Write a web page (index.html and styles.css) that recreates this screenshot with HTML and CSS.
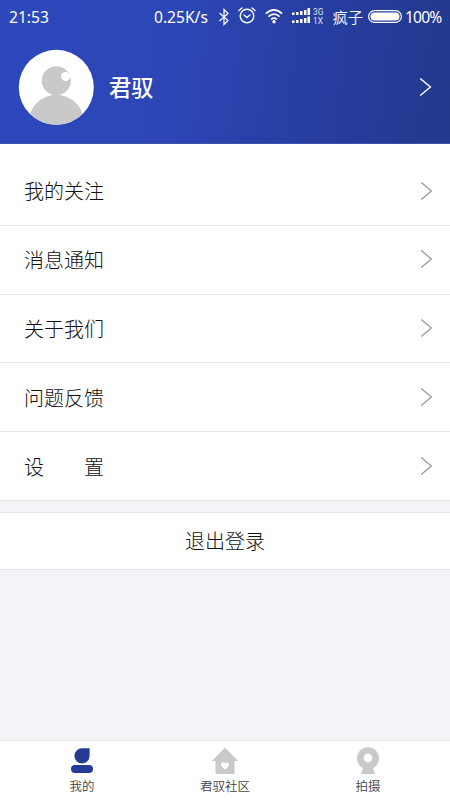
FILE: index.html
```html
<!DOCTYPE html>
<html lang="zh-CN">
<head>
<meta charset="utf-8">
<meta name="viewport" content="width=device-width, initial-scale=1">
<title>我的</title>
<link rel="stylesheet" href="styles.css">
</head>
<body>
<div class="app">
  <header class="header">
    <div class="status">
      <span class="time">21:53</span>
      <span class="speed">0.25K/s</span>
      <svg class="bluetooth" width="12" height="18" viewBox="0 0 12 18" fill="none" stroke="currentColor" stroke-width="1.2"><path d="M1.5 5 10 12.5 6 16.5V1.5L10 5.5 1.5 13"/></svg>
      <svg class="alarm" width="18" height="18" viewBox="0 0 18 18" fill="none" stroke="currentColor" stroke-width="1.4" stroke-linecap="round"><circle cx="9" cy="9" r="6.8"/><path d="M1 3.5 4 1M17 3.5 14 1M6 8 9 10.5l3-2.5"/></svg>
      <svg class="wifi" width="18" height="16" viewBox="0 0 18 16" fill="none" stroke="currentColor" stroke-width="1.6"><path d="M.8 5.6Q9-2 17.2 5.6M3.4 8.6q5.6-5 11.2 0M6 11.3q3-2.5 6 0"/><circle cx="9" cy="13.8" r="1.7" fill="currentColor" stroke="none"/></svg>
      <svg class="signal" width="18" height="16" viewBox="0 0 18 16" fill="currentColor"><path d="M0 4.5h2.5V7H0zM4 4h2.5v3H4zM8 3h2.5v4H8zM12 2h2.5v5H12zM15.5 0H18v7h-2.5zM0 12.5h2.5V15H0zM4 12h2.5v3H4zM8 11h2.5v4H8zM12 10h2.5v5H12zM15.5 8.5H18V15h-2.5z"/></svg>
      <span class="network"><span>3G</span><span>1X</span></span>
      <span class="carrier">疯子</span>
      <svg class="battery" width="34" height="13" viewBox="0 0 34 13"><rect x=".6" y=".6" width="32.8" height="11.8" rx="5.9" fill="none" stroke="currentColor" stroke-width="1.2"/><rect x="2.5" y="2.5" width="29" height="8" rx="3.8" fill="currentColor"/></svg>
      <span class="percent">100%</span>
    </div>
    <div class="profile">
      <svg class="avatar" width="76" height="76" viewBox="0 0 76 76">
        <defs><clipPath id="face"><circle cx="38.3" cy="38.3" r="37.5"/></clipPath></defs>
        <circle cx="38.3" cy="38.3" r="37.5" fill="#fff"/>
        <g clip-path="url(#face)"><circle cx="38.3" cy="31.8" r="14.5" fill="#c9c9c9"/><circle cx="38.3" cy="73.3" r="27.5" fill="#c9c9c9"/></g>
        <circle cx="47.6" cy="27.5" r="4.5" fill="#fff"/>
      </svg>
      <span class="name">君驭</span>
      <svg class="chevron light" width="13" height="20" viewBox="0 0 13 20"><path d="M1.2 1.5 11.4 10 1.2 18.5"/></svg>
    </div>
  </header>
  <nav class="menu">
    <a class="row"><span>我的关注</span><svg class="chevron" width="13" height="20" viewBox="0 0 13 20"><path d="M1.2 1.5 11.4 10 1.2 18.5"/></svg></a>
    <a class="row"><span>消息通知</span><svg class="chevron" width="13" height="20" viewBox="0 0 13 20"><path d="M1.2 1.5 11.4 10 1.2 18.5"/></svg></a>
    <a class="row"><span>关于我们</span><svg class="chevron" width="13" height="20" viewBox="0 0 13 20"><path d="M1.2 1.5 11.4 10 1.2 18.5"/></svg></a>
    <a class="row"><span>问题反馈</span><svg class="chevron" width="13" height="20" viewBox="0 0 13 20"><path d="M1.2 1.5 11.4 10 1.2 18.5"/></svg></a>
    <a class="row"><span>设　　置</span><svg class="chevron" width="13" height="20" viewBox="0 0 13 20"><path d="M1.2 1.5 11.4 10 1.2 18.5"/></svg></a>
  </nav>
  <button class="logout">退出登录</button>
  <footer class="tabs">
    <a class="tab active"><svg width="28" height="28" viewBox="0 0 28 28" fill="currentColor"><path d="M14 1.2h7.6v7.6A7.6 7.6 0 1 1 14 1.2z"/><rect x="3" y="18" width="22" height="8" rx="4"/></svg><span>我的</span></a>
    <a class="tab"><svg width="28" height="28" viewBox="0 0 28 28" fill="currentColor"><path d="M14 .5 27 14h-3.5v13h-19V14H1z"/><path fill="#fff" d="M14 22.8 10.6 19.3c-2.2-2.4 1.3-5.7 3.4-2.9 2.1-2.8 5.6.5 3.4 2.9z"/></svg><span>君驭社区</span></a>
    <a class="tab"><svg width="28" height="28" viewBox="0 0 28 28" fill="currentColor"><path d="M9.5 20h9L21 27H7z"/><circle cx="14" cy="11.3" r="11"/><circle cx="14" cy="11" r="4.4" fill="#fff"/></svg><span>拍摄</span></a>
  </footer>
</div>
</body>
</html>
```
FILE: styles.css
```css
* { box-sizing: border-box; }

body {
  margin: 0;
  font-family: "Noto Sans", "Noto Sans CJK SC", sans-serif;
  color: #333;
}

.app {
  display: flex;
  flex-direction: column;
  width: 450px;
  height: 800px;
  background: #f3f4f8;
  overflow: hidden;
}

.header {
  height: 144px;
  flex: none;
  color: #fff;
  background: linear-gradient(97deg, #2d48bc 0%, #2c46b6 38%, #253c9a 80%, #23398e 100%);
  border-bottom: 1px solid #3c52ad;
}

.status {
  display: flex;
  align-items: center;
  height: 33px;
  padding-left: 9px;
  font-size: 15.6px;
  white-space: nowrap;
}

.status svg { flex: none; }
.time { width: 145px; }
.speed { width: 64px; }
.bluetooth { margin-right: 8px; }
.status .alarm { margin: -1px 9px 0 0; }
.status .wifi { margin: -1px 9px 0 0; }
.signal { margin: -1px 3px 0 0; }

.network {
  display: flex;
  flex-direction: column;
  width: 19.5px;
  font-family: Roboto, sans-serif;
  font-size: 8.3px;
  line-height: 9px;
  opacity: .85;
}

.carrier { width: 35.5px; margin-top: -1px; font-size: 15.3px; font-weight: 350; }
.battery { margin: -1px 3px 0 0; }
.percent { font-size: 15.6px; letter-spacing: -.8px; }

.profile {
  display: flex;
  align-items: center;
  height: 109px;
  padding: 0 18px;
}

.avatar { margin-top: -1px; }

.name {
  flex: 1;
  margin: -2px 0 0 15px;
  font-size: 22.3px;
  font-weight: 500;
}

.chevron {
  flex: none;
  fill: none;
  stroke: #999;
  stroke-width: 1.3;
}

.light { margin-top: -1px; stroke: #fff; stroke-width: 1.5; }

.menu {
  flex: none;
  padding-top: 13px;
  background: #fff;
}

.row {
  display: flex;
  align-items: center;
  justify-content: space-between;
  height: 68.8px;
  padding: 0 17.5px 0 24px;
  border-bottom: 1px solid #e6e6e8;
  font-size: 20px;
  font-weight: 300;
  font-family: "Noto Sans CJK SC", sans-serif;
  color: #111;
}

.row .chevron { margin-top: -.5px; }

.logout {
  flex: none;
  height: 58px;
  margin: 11px 0 0;
  padding: 0;
  border: solid #e6e6e8;
  border-width: 1px 0;
  background: #fff;
  color: #111;
  font: 300 20px "Noto Sans CJK SC", sans-serif;
}

.tabs {
  display: flex;
  justify-content: space-between;
  height: 60px;
  margin-top: auto;
  padding: 6px 32px 0;
  border-top: 1px solid #e9eaec;
  background: #fff;
}

.tab {
  display: flex;
  flex-direction: column;
  align-items: center;
  width: 100px;
  color: #c9c9c9;
}

.tab span {
  margin-top: 3px;
  color: #444;
  font-size: 12.5px;
  font-weight: 350;
  line-height: 18px;
}

.active { color: #243c96; }
```
